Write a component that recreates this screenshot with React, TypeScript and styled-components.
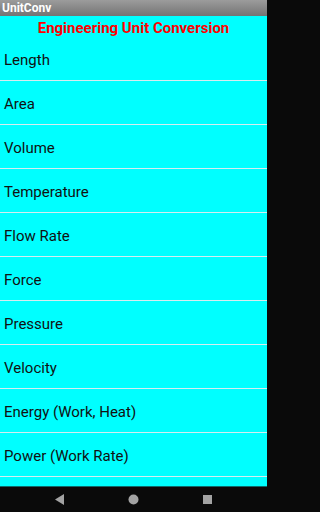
import styled, { createGlobalStyle } from "styled-components"

const GlobalStyle = createGlobalStyle`
  html, body {
    margin: 0;
    padding: 0;
    background: #0a0a0a;
  }
  body {
    font-family: Roboto, "Noto Sans", sans-serif;
  }
`

const Screen = styled.div`
  width: 267px;
  height: 512px;
  display: flex;
  flex-direction: column;
  overflow: hidden;
`

const TitleBar = styled.div`
  height: 16px;
  flex-shrink: 0;
  display: flex;
  align-items: center;
  padding-left: 2px;
  background: linear-gradient(#9c9c9c, #747474);
  color: #fff;
  font-size: 12px;
  font-weight: bold;
`

const Content = styled.div`
  flex: 1;
  background-color: #00ffff;
  border-bottom: 1px solid #0c6b6b;
  overflow: hidden;
`

const Heading = styled.div`
  height: 21px;
  padding-top: 2px;
  box-sizing: border-box;
  display: flex;
  justify-content: center;
  align-items: center;
  color: #ff0000;
  font-size: 15px;
  font-weight: bold;
`

const Row = styled.div`
  height: 40px;
  padding: 3px 0 0 4px;
  display: flex;
  align-items: center;
  border-bottom: 1px solid #d6ecf0;
  color: #111;
  font-size: 15px;
`

const NavBar = styled.div`
  height: 25px;
  flex-shrink: 0;
  background-color: #0a0a0a;
  display: flex;
  justify-content: center;
  align-items: center;
  gap: 63px;
`

const NavIcon = styled.svg`
  width: 11px;
  height: 11px;
  fill: #a3a3a3;
`

const units = [
  "Length",
  "Area",
  "Volume",
  "Temperature",
  "Flow Rate",
  "Force",
  "Pressure",
  "Velocity",
  "Energy (Work, Heat)",
  "Power (Work Rate)",
  "",
]

const App = () => {
  return (
    <Screen>
      <GlobalStyle />
      <TitleBar>UnitConv</TitleBar>
      <Content>
        <Heading>Engineering Unit Conversion</Heading>
        {units.map((unit, index) => (
          <Row key={`unit-row-${index}`}>{unit}</Row>
        ))}
      </Content>
      <NavBar>
        <NavIcon viewBox="0 0 11 11">
          <polygon points="10,0 10,11 1,5.5" />
        </NavIcon>
        <NavIcon viewBox="0 0 11 11">
          <circle cx="5.5" cy="5.5" r="5" />
        </NavIcon>
        <NavIcon viewBox="0 0 11 11">
          <rect x="1" y="1" width="9" height="9" />
        </NavIcon>
      </NavBar>
    </Screen>
  )
}

export default App
